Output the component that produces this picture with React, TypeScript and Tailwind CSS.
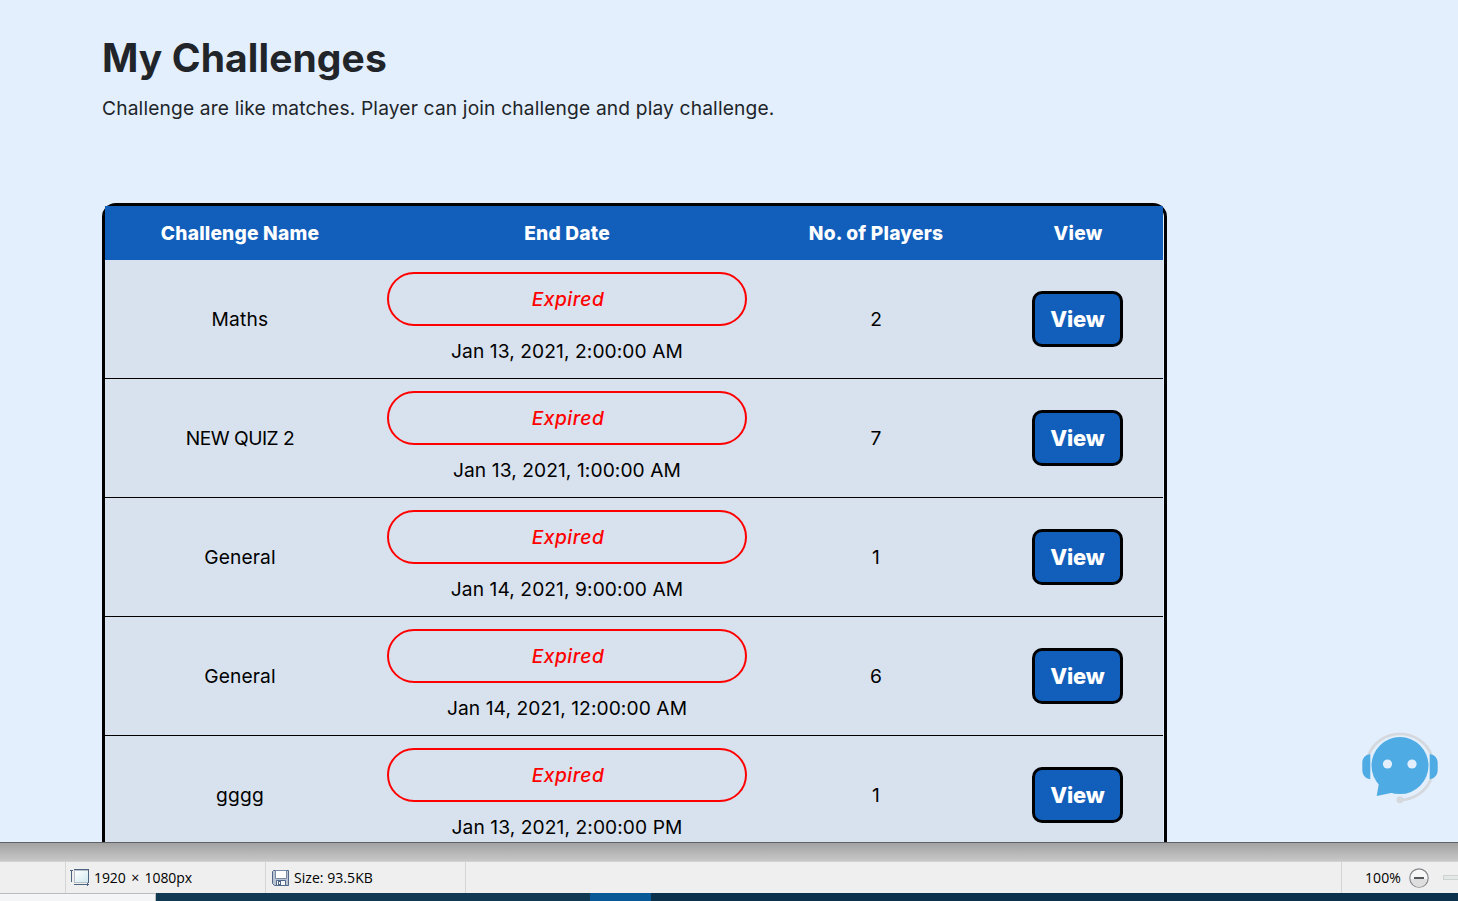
const rows = [
  { name: 'Maths', spacing: 'tracking-[0.2px]', date: 'Jan 13, 2021, 2:00:00 AM', players: 2 },
  { name: 'NEW QUIZ 2', spacing: 'tracking-[-0.5px]', date: 'Jan 13, 2021, 1:00:00 AM', players: 7 },
  { name: 'General', spacing: 'tracking-[0.1px]', date: 'Jan 14, 2021, 9:00:00 AM', players: 1 },
  { name: 'General', spacing: 'tracking-[0.1px]', date: 'Jan 14, 2021, 12:00:00 AM', players: 6 },
  { name: 'gggg', spacing: 'tracking-[0.2px]', date: 'Jan 13, 2021, 2:00:00 PM', players: 1 },
];

function ChatBot() {
  return (
    <svg className="absolute left-[1350px] top-[720px]" width="108" height="95" viewBox="0 0 108 95" aria-label="Chat">
      <path d="M18.5 35A34 34 0 0 1 81.5 35M81.5 58A34 34 0 0 1 50 80" fill="none" stroke="#d5d9dd" strokeWidth="2.8" />
      <circle cx="50" cy="79.7" r="3.5" fill="#d5d9dd" />
      <path d="M20.3 34V59.3C15 58.5 12.3 54.5 12.3 50V43C12.3 38.5 15 34.8 20.3 34ZM79.7 34V59.3C85 58.5 87.7 54.5 87.7 50V43C87.7 38.5 85 34.8 79.7 34Z" fill="#4eabe4" />
      <circle cx="50" cy="45.6" r="28.5" fill="#4eabe4" />
      <path d="M28.8 64L26.7 76L41 73L50 73V50L26 60Z" fill="#4eabe4" />
      <circle cx="37.5" cy="44" r="4.6" fill="#e3effd" />
      <circle cx="62" cy="44" r="4.6" fill="#e3effd" />
    </svg>
  );
}

function DimensionsIcon() {
  return (
    <svg width="20" height="18" viewBox="0 0 20 18" fill="none">
      <defs>
        <linearGradient id="page" x1="0" y1="0" x2="1" y2="1">
          <stop stopColor="#fff" />
          <stop offset="1" stopColor="#cfe9ef" />
        </linearGradient>
      </defs>
      <path d="M4 1h15v13H4z" fill="#b6bfca" />
      <path d="M5 2h13v11H5z" fill="url(#page)" />
      <path d="M4 .5h15M18.5 1v13" stroke="#4d6382" />
      <path d="M1.5 1v12M0 1.5h3M4 15.5h15M17.5 14v3" stroke="#4d6382" />
    </svg>
  );
}

function DiskIcon() {
  return (
    <svg width="18" height="18" viewBox="0 0 18 18" fill="none">
      <path d="M.5 2.5l1-1h15v15h-14l-2-2z" fill="#b9c3d1" stroke="#52688a" />
      <path d="M3.5 1.5h11v8h-11z" fill="#fff" stroke="#758ba7" />
      <path d="M4.5 11.5h9v5h-9z" fill="#f4f6f8" stroke="#52688a" />
      <path d="M6 12h3v4H6z" fill="#52688a" />
      <path d="M7 13h1v2H7z" fill="#fff" />
    </svg>
  );
}

export default function App() {
  return (
    <div className="flex h-[901px] w-[1458px] flex-col overflow-hidden bg-[#efefef] font-['Inter',sans-serif] text-black">
      <main className="relative h-[842px] shrink-0 overflow-hidden bg-[#e3effd] pl-[102px]">
        <h1 className="pt-[34px] text-[39px] leading-[48px] font-bold tracking-[0.1px] text-[#212529]">
          <span>My Challenges</span>
        </h1>
        <p className="mt-[11px] text-[19.2px] leading-[30px] tracking-[0.15px] text-[#212529]">
          <span>Challenge are like matches. Player can join challenge and play challenge.</span>
        </p>
        <div className="mt-[80px] w-[1065px] rounded-t-[14px] border-[3px] border-b-0 border-black">
          <div className="w-[1058px]">
            <div className="grid h-[54px] grid-cols-[270px_384px_234px_170px] items-center bg-[#115ebb] text-center text-[19.2px] font-extrabold tracking-[0.2px] text-white">
              <span>Challenge Name</span>
              <span>End Date</span>
              <span>No. of Players</span>
              <span>View</span>
            </div>
            {rows.map((r, i) => (
              <div
                key={i}
                className="grid h-[119px] grid-cols-[270px_384px_234px_170px] items-center border-b border-black bg-[#d8e2ee] text-center text-[19.2px]"
              >
                <span className={r.spacing}>{r.name}</span>
                <div className="flex h-full flex-col items-center pt-3">
                  <div className="flex h-[54px] w-[360px] items-center justify-center rounded-full border-2 border-[#ff0000] pl-0.5 font-medium tracking-[0.5px] text-[#ff0000] italic">
                    <span>Expired</span>
                  </div>
                  <span className="mt-[10px] leading-[30px] tracking-[0.08px]">{r.date}</span>
                </div>
                <span>{r.players}</span>
                <div className="flex justify-center pr-px">
                  <button className="h-14 w-[91px] rounded-[10px] border-[3px] border-black bg-[#115ebb] text-[22px] font-extrabold tracking-[-0.2px] text-white">
                    View
                  </button>
                </div>
              </div>
            ))}
          </div>
        </div>
        <ChatBot />
      </main>
      <div className="h-[19px] shrink-0 border-t border-[#606165] bg-linear-to-b from-[#a2a2a2] to-[#c8c8c8]" />
      <footer className="flex h-8 shrink-0 items-stretch border-t border-[#d2d2d2] bg-[#efefef] font-['Open_Sans',sans-serif] text-[14px]">
        <div className="w-[65px]" />
        <div className="flex w-[200px] items-center border-l border-[#d5d5d5] pl-1">
          <DimensionsIcon />
          <span className="ml-1 tracking-[-0.1px] word-spacing-normal [word-spacing:2px]">1920 × 1080px</span>
        </div>
        <div className="flex w-[200px] items-center border-l border-[#d5d5d5] pl-[6px]">
          <DiskIcon />
          <span className="ml-1 tracking-[0.05px]">Size: 93.5KB</span>
        </div>
        <div className="w-[876px] border-l border-[#d5d5d5]" />
        <div className="flex flex-1 items-center border-l border-[#d5d5d5] pl-[23px]">
          <span className="w-[44px] tracking-[0.1px]">100%</span>
          <svg width="20" height="20" viewBox="0 0 20 20">
            <circle cx="10" cy="10" r="9.2" fill="#f7f7f7" stroke="#85878b" strokeWidth="1.2" />
            <path d="M2 11A8 8 0 0 0 18 11Z" fill="#dedede" />
            <path d="M5 10h10" stroke="#55585c" strokeWidth="2" />
          </svg>
          <div className="ml-[14px] h-[5px] flex-1 border border-r-0 border-[#cdd2d2] bg-[#e4e8e7]" />
        </div>
      </footer>
      <div className="flex h-2 shrink-0">
        <div className="w-[156px] border-t border-r border-[#b9bdbf] bg-[#f3f5f7]" />
        <div className="w-[434px] bg-[#123952]" />
        <div className="w-[61px] bg-[#075896]" />
        <div className="flex-1 bg-[#0c314d]" />
      </div>
    </div>
  );
}
